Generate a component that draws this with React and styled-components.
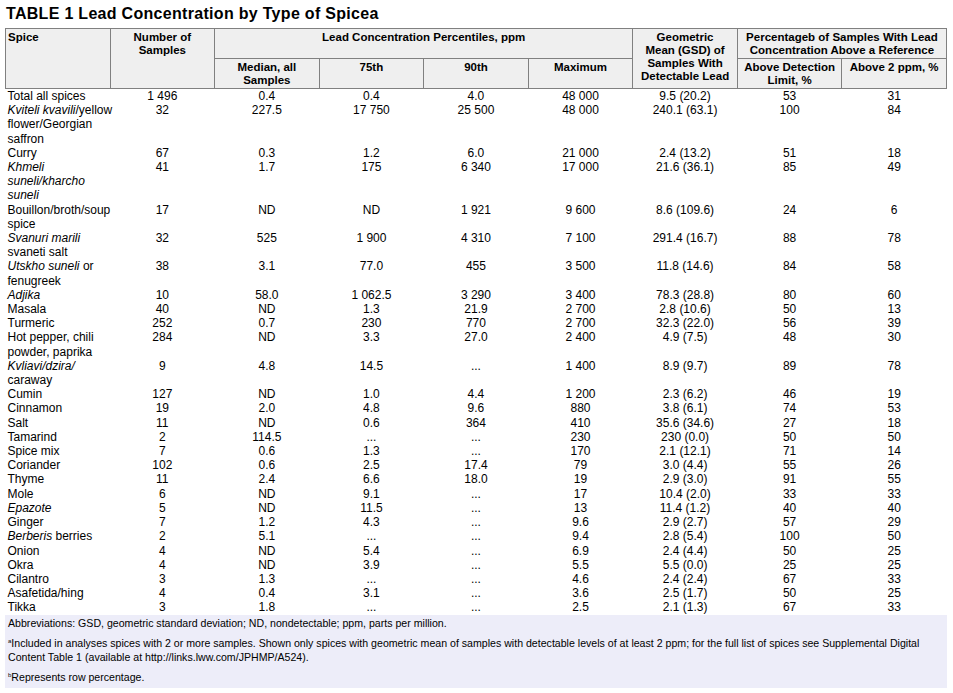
import React from "react";
import styled, { createGlobalStyle } from "styled-components";

const GlobalStyle = createGlobalStyle`
  html, body { margin: 0; padding: 0; background: #ffffff; }
  body { font-family: "Liberation Sans", Arial, sans-serif; color: #000; }
`;

const Page = styled.div`
  width: 942px;
  padding: 4px 6px 6px 5px;
`;

const Title = styled.h1`
  margin: 0 0 4px 1px;
  font-size: 16px;
  line-height: 20px;
  font-weight: bold;
  letter-spacing: 0.3px;
`;

const Table = styled.table`
  width: 942px;
  table-layout: fixed;
  border-collapse: collapse;
`;

const HeadCell = styled.th`
  background: #efefef;
  border: 1px solid #808080;
  font-size: 11.5px;
  line-height: 13px;
  font-weight: bold;
  padding: 2px 2px 1px;
  vertical-align: top;
  text-align: ${(p) => (p.$left ? "left" : "center")};
`;

const Cell = styled.td`
  font-size: 12px;
  line-height: 14.2px;
  padding: 0 2px;
  vertical-align: top;
  white-space: nowrap;
  text-align: ${(p) => (p.$left ? "left" : "center")};
`;

const Line = styled.div``;

const Notes = styled.div`
  margin-top: 0;
  background: #ededf9;
  padding: 1px 3px 4px;
  font-size: 10.6px;
  line-height: 14px;
`;

const Note = styled.p`
  margin: 0 0 6px;
  &:last-child { margin-bottom: 0; }
`;

const Sup = styled.sup`
  font-size: 6px;
  vertical-align: 4px;
  line-height: 0;
`;

const I = styled.i``;

const D = "...";

const rows = [
  [["Total all spices"], "1 496", "0.4", "0.4", "4.0", "48 000", "9.5 (20.2)", "53", "31"],
  [[<><I>Kviteli kvavili</I>/yellow</>, "flower/Georgian", "saffron"], "32", "227.5", "17 750", "25 500", "48 000", "240.1 (63.1)", "100", "84"],
  [["Curry"], "67", "0.3", "1.2", "6.0", "21 000", "2.4 (13.2)", "51", "18"],
  [[<I>Khmeli</I>, <I>suneli/kharcho</I>, <I>suneli</I>], "41", "1.7", "175", "6 340", "17 000", "21.6 (36.1)", "85", "49"],
  [["Bouillon/broth/soup", "spice"], "17", "ND", "ND", "1 921", "9 600", "8.6 (109.6)", "24", "6"],
  [[<I>Svanuri marili</I>, "svaneti salt"], "32", "525", "1 900", "4 310", "7 100", "291.4 (16.7)", "88", "78"],
  [[<><I>Utskho suneli</I> or</>, "fenugreek"], "38", "3.1", "77.0", "455", "3 500", "11.8 (14.6)", "84", "58"],
  [[<I>Adjika</I>], "10", "58.0", "1 062.5", "3 290", "3 400", "78.3 (28.8)", "80", "60"],
  [["Masala"], "40", "ND", "1.3", "21.9", "2 700", "2.8 (10.6)", "50", "13"],
  [["Turmeric"], "252", "0.7", "230", "770", "2 700", "32.3 (22.0)", "56", "39"],
  [["Hot pepper, chili", "powder, paprika"], "284", "ND", "3.3", "27.0", "2 400", "4.9 (7.5)", "48", "30"],
  [[<I>Kvliavi/dzira/</I>, "caraway"], "9", "4.8", "14.5", D, "1 400", "8.9 (9.7)", "89", "78"],
  [["Cumin"], "127", "ND", "1.0", "4.4", "1 200", "2.3 (6.2)", "46", "19"],
  [["Cinnamon"], "19", "2.0", "4.8", "9.6", "880", "3.8 (6.1)", "74", "53"],
  [["Salt"], "11", "ND", "0.6", "364", "410", "35.6 (34.6)", "27", "18"],
  [["Tamarind"], "2", "114.5", D, D, "230", "230 (0.0)", "50", "50"],
  [["Spice mix"], "7", "0.6", "1.3", D, "170", "2.1 (12.1)", "71", "14"],
  [["Coriander"], "102", "0.6", "2.5", "17.4", "79", "3.0 (4.4)", "55", "26"],
  [["Thyme"], "11", "2.4", "6.6", "18.0", "19", "2.9 (3.0)", "91", "55"],
  [["Mole"], "6", "ND", "9.1", D, "17", "10.4 (2.0)", "33", "33"],
  [[<I>Epazote</I>], "5", "ND", "11.5", D, "13", "11.4 (1.2)", "40", "40"],
  [["Ginger"], "7", "1.2", "4.3", D, "9.6", "2.9 (2.7)", "57", "29"],
  [[<><I>Berberis</I> berries</>], "2", "5.1", D, D, "9.4", "2.8 (5.4)", "100", "50"],
  [["Onion"], "4", "ND", "5.4", D, "6.9", "2.4 (4.4)", "50", "25"],
  [["Okra"], "4", "ND", "3.9", D, "5.5", "5.5 (0.0)", "25", "25"],
  [["Cilantro"], "3", "1.3", D, D, "4.6", "2.4 (2.4)", "67", "33"],
  [["Asafetida/hing"], "4", "0.4", "3.1", D, "3.6", "2.5 (1.7)", "50", "25"],
  [["Tikka"], "3", "1.8", D, D, "2.5", "2.1 (1.3)", "67", "33"],
];

export default function App() {
  return (
    <Page>
      <GlobalStyle />
      <Title>TABLE 1 Lead Concentration by Type of Spicea</Title>
      <Table>
        <thead>
          <tr>
            <HeadCell rowSpan={2} $left>Spice</HeadCell>
            <HeadCell rowSpan={2}>Number of<br />Samples</HeadCell>
            <HeadCell colSpan={4}>Lead Concentration Percentiles, ppm</HeadCell>
            <HeadCell rowSpan={2}>Geometric<br />Mean (GSD) of<br />Samples With<br />Detectable Lead</HeadCell>
            <HeadCell colSpan={2}>Percentageb of Samples With Lead<br />Concentration Above a Reference</HeadCell>
          </tr>
          <tr>
            <HeadCell>Median, all<br />Samples</HeadCell>
            <HeadCell>75th</HeadCell>
            <HeadCell>90th</HeadCell>
            <HeadCell>Maximum</HeadCell>
            <HeadCell>Above Detection<br />Limit, %</HeadCell>
            <HeadCell>Above 2 ppm, %</HeadCell>
          </tr>
        </thead>
        <tbody>
          {rows.map(([spice, ...vals], i) => (
            <tr key={i}>
              <Cell $left>
                {spice.map((l, j) => (
                  <Line key={j}>{l}</Line>
                ))}
              </Cell>
              {vals.map((v, j) => (
                <Cell key={j}>{v}</Cell>
              ))}
            </tr>
          ))}
        </tbody>
      </Table>
      <Notes>
        <Note>Abbreviations: GSD, geometric standard deviation; ND, nondetectable; ppm, parts per million.</Note>
        <Note>
          <Sup>a</Sup>Included in analyses spices with 2 or more samples. Shown only spices with geometric mean of samples with detectable levels of at least 2 ppm; for the full list of spices see Supplemental Digital
          <br />
          Content Table 1 (available at http://links.lww.com/JPHMP/A524).
        </Note>
        <Note>
          <Sup>b</Sup>Represents row percentage.
        </Note>
      </Notes>
    </Page>
  );
}
